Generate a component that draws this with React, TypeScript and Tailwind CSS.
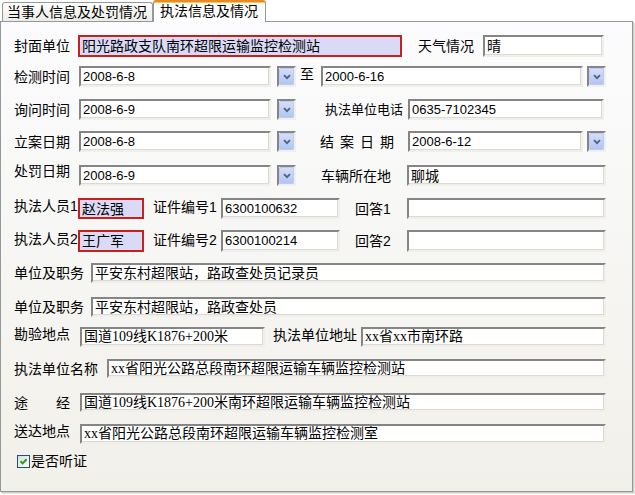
import React from "react";

const SUNKEN =
  "border-2 border-t-[#858585] border-l-[#858585] border-b-[#f0efe9] border-r-[#f0efe9] bg-white shadow-[inset_-1px_-1px_0_#dcdbd3]";
const RED = "border-2 border-[#c8201c] bg-[#dadaf7]";

function Field({
  className,
  value,
  red,
  kind,
}: {
  className: string;
  value?: string;
  red?: boolean;
  kind?: "num" | "serif";
}) {
  const font =
    kind === "num"
      ? "text-[13px]"
      : kind === "serif"
      ? "font-['Liberation_Serif','Noto_Sans_CJK_SC',serif] text-[14px]"
      : "text-[14px]";
  return (
    <div
      className={`${className} h-full shrink-0 flex items-center pl-[2px] overflow-hidden whitespace-nowrap leading-[18px] ${font} ${
        red ? RED : SUNKEN
      }`}
    >
      {value}
    </div>
  );
}

function DD({ className }: { className?: string }) {
  return (
    <div className={`${className ?? ""} w-[19px] h-full shrink-0 flex ${SUNKEN}`}>
      <div className="flex-1 rounded-[2px] bg-gradient-to-b from-[#d4defa] to-[#b2c4f2] border border-[#bccbf0] flex items-center justify-center">
        <svg width="8" height="6" viewBox="0 0 8 6">
          <path d="M1 1.2 L4 4.2 L7 1.2" stroke="#4d6185" strokeWidth="1.8" fill="none" />
        </svg>
      </div>
    </div>
  );
}

function Label({ className, children }: { className: string; children: React.ReactNode }) {
  return <div className={`${className} shrink-0 whitespace-nowrap leading-[20px]`}>{children}</div>;
}

export default function App() {
  return (
    <div className="w-[635px] h-[495px] bg-white font-['Liberation_Sans','Noto_Sans_CJK_SC',sans-serif] text-[14px] text-black overflow-hidden">
      {/* Tabs */}
      <div className="flex items-end h-[21px] relative z-10">
        <div className="ml-[2px] w-[151px] h-[19px] border border-b-0 border-[#919b9c] rounded-t-[3px] bg-gradient-to-b from-white to-[#ecebe6] pl-[4px] leading-[18px] whitespace-nowrap">
          当事人信息及处罚情况
        </div>
        <div className="w-[113px] h-[22px] -mb-[1px] border border-b-0 border-[#919b9c] border-t-2 border-t-[#e68b2c] shadow-[inset_0_1px_0_#ffc73c] rounded-t-[3px] bg-white pl-[6px] leading-[19px] whitespace-nowrap">
          执法信息及情况
        </div>
      </div>

      {/* Panel */}
      <div className="w-[633px] h-[471px] border border-[#919b9c] bg-gradient-to-b from-[#fcfcfe] to-[#f1f0e9] pl-[13px] flex flex-col shadow-[1px_1px_0_#d0cfc8,2px_2px_0_#e6e5de]">
        {/* R1 */}
        <div className="mt-[13px] h-[22px] flex items-center">
          <Label className="w-[64px]">封面单位</Label>
          <Field className="w-[324px]" red value="阳光路政支队南环超限运输监控检测站" />
          <Label className="ml-[16px] w-[65px]">天气情况</Label>
          <Field className="w-[121px] h-[20px]" value="晴" />
        </div>

        {/* R2 */}
        <div className="mt-[9px] h-[21px] flex items-center">
          <Label className="w-[65px]">检测时间</Label>
          <Field className="w-[192px]" kind="num" value="2008-6-8" />
          <DD className="ml-[6px]" />
          <Label className="ml-[4px] w-[21px] mb-[6px]">至</Label>
          <Field className="w-[262px]" kind="num" value="2000-6-16" />
          <DD className="ml-[4px]" />
        </div>

        {/* R3 */}
        <div className="mt-[12px] h-[21px] flex items-center">
          <Label className="w-[65px]">询问时间</Label>
          <Field className="w-[192px]" kind="num" value="2008-6-9" />
          <DD className="ml-[6px]" />
          <Label className="ml-[29px] w-[83px] text-[13px]">执法单位电话</Label>
          <Field className="w-[196px]" kind="num" value="0635-7102345" />
        </div>

        {/* R4 */}
        <div className="mt-[11px] h-[21px] flex items-center">
          <Label className="w-[65px]">立案日期</Label>
          <Field className="w-[192px]" kind="num" value="2008-6-8" />
          <DD className="ml-[6px]" />
          <div className="ml-[24px] w-[88px] shrink-0 flex gap-[6px] leading-[20px]">
            <span>结</span>
            <span>案</span>
            <span>日</span>
            <span>期</span>
          </div>
          <Field className="w-[175px]" kind="num" value="2008-6-12" />
          <DD className="ml-[4px]" />
        </div>

        {/* R5 */}
        <div className="mt-[13px] h-[21px] flex items-center">
          <Label className="w-[65px] mb-[10px]">处罚日期</Label>
          <Field className="w-[192px]" kind="num" value="2008-6-9" />
          <DD className="ml-[6px]" />
          <Label className="ml-[25px] w-[86px]">车辆所在地</Label>
          <Field className="w-[199px]" value="聊城" />
        </div>

        {/* R6 */}
        <div className="mt-[12px] h-[21px] flex items-center">
          <Label className="w-[64px] mb-[5px]">执法人员1</Label>
          <Field className="w-[66px]" red value="赵法强" />
          <Label className="ml-[9px] w-[68px] mb-[3px]">证件编号1</Label>
          <Field className="w-[119px] h-[20px]" kind="num" value="6300100632" />
          <Label className="ml-[15px] w-[52px]">回答1</Label>
          <Field className="w-[199px]" />
        </div>

        {/* R7 */}
        <div className="mt-[11px] h-[22px] flex items-center">
          <Label className="w-[64px] mb-[5px]">执法人员2</Label>
          <Field className="w-[66px]" red value="王广军" />
          <Label className="ml-[9px] w-[68px] mb-[3px]">证件编号2</Label>
          <Field className="w-[119px] h-[20px]" kind="num" value="6300100214" />
          <Label className="ml-[15px] w-[52px]">回答2</Label>
          <Field className="w-[199px] h-[20px]" />
        </div>

        {/* R8 */}
        <div className="mt-[11px] h-[20px] flex items-center">
          <Label className="w-[77px]">单位及职务</Label>
          <Field className="w-[515px]" value="平安东村超限站，路政查处员记录员" />
        </div>

        {/* R9 */}
        <div className="mt-[14px] h-[20px] flex items-center">
          <Label className="w-[77px]">单位及职务</Label>
          <Field className="w-[515px]" value="平安东村超限站，路政查处员" />
        </div>

        {/* R10 */}
        <div className="mt-[10px] h-[20px] flex items-center">
          <Label className="w-[66px] mb-[6px]">勘验地点</Label>
          <Field className="w-[185px]" kind="serif" value="国道109线K1876+200米" />
          <Label className="ml-[8px] w-[88px] mb-[4px]">执法单位地址</Label>
          <Field className="w-[245px]" kind="serif" value="xx省xx市南环路" />
        </div>

        {/* R11 */}
        <div className="mt-[12px] h-[19px] flex items-center">
          <Label className="w-[93px]">执法单位名称</Label>
          <Field className="w-[499px]" kind="serif" value="xx省阳光公路总段南环超限运输车辆监控检测站" />
        </div>

        {/* R12 */}
        <div className="mt-[15px] h-[19px] flex items-center">
          <div className="w-[66px] shrink-0 leading-[20px]">
            <div className="w-[56px] flex justify-between">
              <span>途</span>
              <span>经</span>
            </div>
          </div>
          <Field className="w-[526px]" kind="serif" value="国道109线K1876+200米南环超限运输车辆监控检测站" />
        </div>

        {/* R13 */}
        <div className="mt-[12px] h-[20px] flex items-center">
          <Label className="w-[66px] mb-[6px]">送达地点</Label>
          <Field className="w-[526px]" kind="serif" value="xx省阳光公路总段南环超限运输车辆监控检测室" />
        </div>

        {/* R14 */}
        <div className="mt-[10px] h-[14px] flex items-center">
          <div className="ml-[3px] w-[13px] h-[13px] shrink-0 border border-[#1c5180] bg-gradient-to-br from-[#dcdcd7] to-white flex items-center justify-center">
            <svg width="9" height="9" viewBox="0 0 9 9">
              <path d="M1.5 4.3 L3.6 6.4 L7.6 2.2" stroke="#21a121" strokeWidth="2" fill="none" />
            </svg>
          </div>
          <div className="ml-[1px] leading-[20px] whitespace-nowrap">是否听证</div>
        </div>
      </div>
    </div>
  );
}
